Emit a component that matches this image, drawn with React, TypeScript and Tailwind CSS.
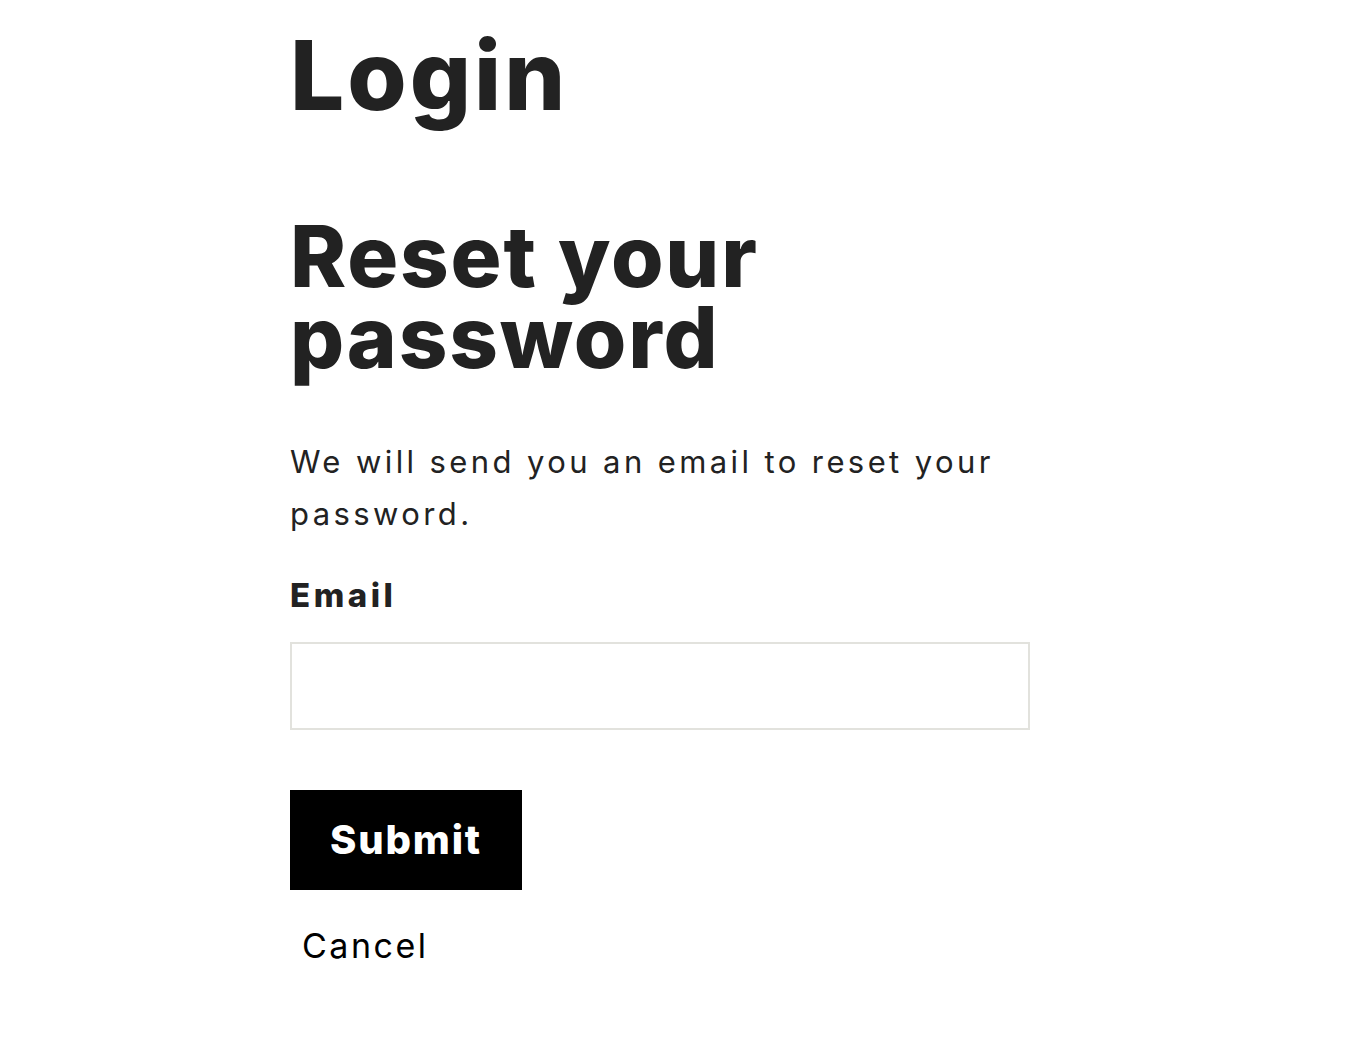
export default function App() {
  return (
    <div className="min-h-screen bg-white font-['Inter',sans-serif] text-[#222]">
      <div className="ml-[290px] w-[740px] pt-[27px]">
        <h1 className="text-[96px] leading-[96px] font-extrabold tracking-[3px]">Login</h1>
        <h2 className="mt-[93px] text-[85px] leading-[81px] font-extrabold tracking-[1.8px]">
          Reset your
          <br />
          password
        </h2>
        <p className="mt-[58px] text-[31px] leading-[52px] tracking-[3.4px] text-[#222]">
          We will send you an email to reset your password.
        </p>
        <form className="mt-[35px] flex flex-col items-start" onSubmit={(e) => e.preventDefault()}>
          <label htmlFor="email" className="text-[33px] leading-[40px] font-extrabold tracking-[3.5px]">
            Email
          </label>
          <input
            id="email"
            type="email"
            className="mt-[27px] h-[88px] w-[740px] border-2 border-[#e2e2dd] bg-white px-5 text-[30px] outline-none"
          />
          <button
            type="submit"
            className="mt-[60px] flex h-[100px] w-[232px] items-center justify-center bg-black text-[40px] font-extrabold tracking-[1.8px] text-white"
          >
            Submit
          </button>
          <a href="#" className="mt-[36px] ml-[12px] text-[34px] leading-[40px] tracking-[2.5px] text-black">
            Cancel
          </a>
        </form>
      </div>
    </div>
  );
}
